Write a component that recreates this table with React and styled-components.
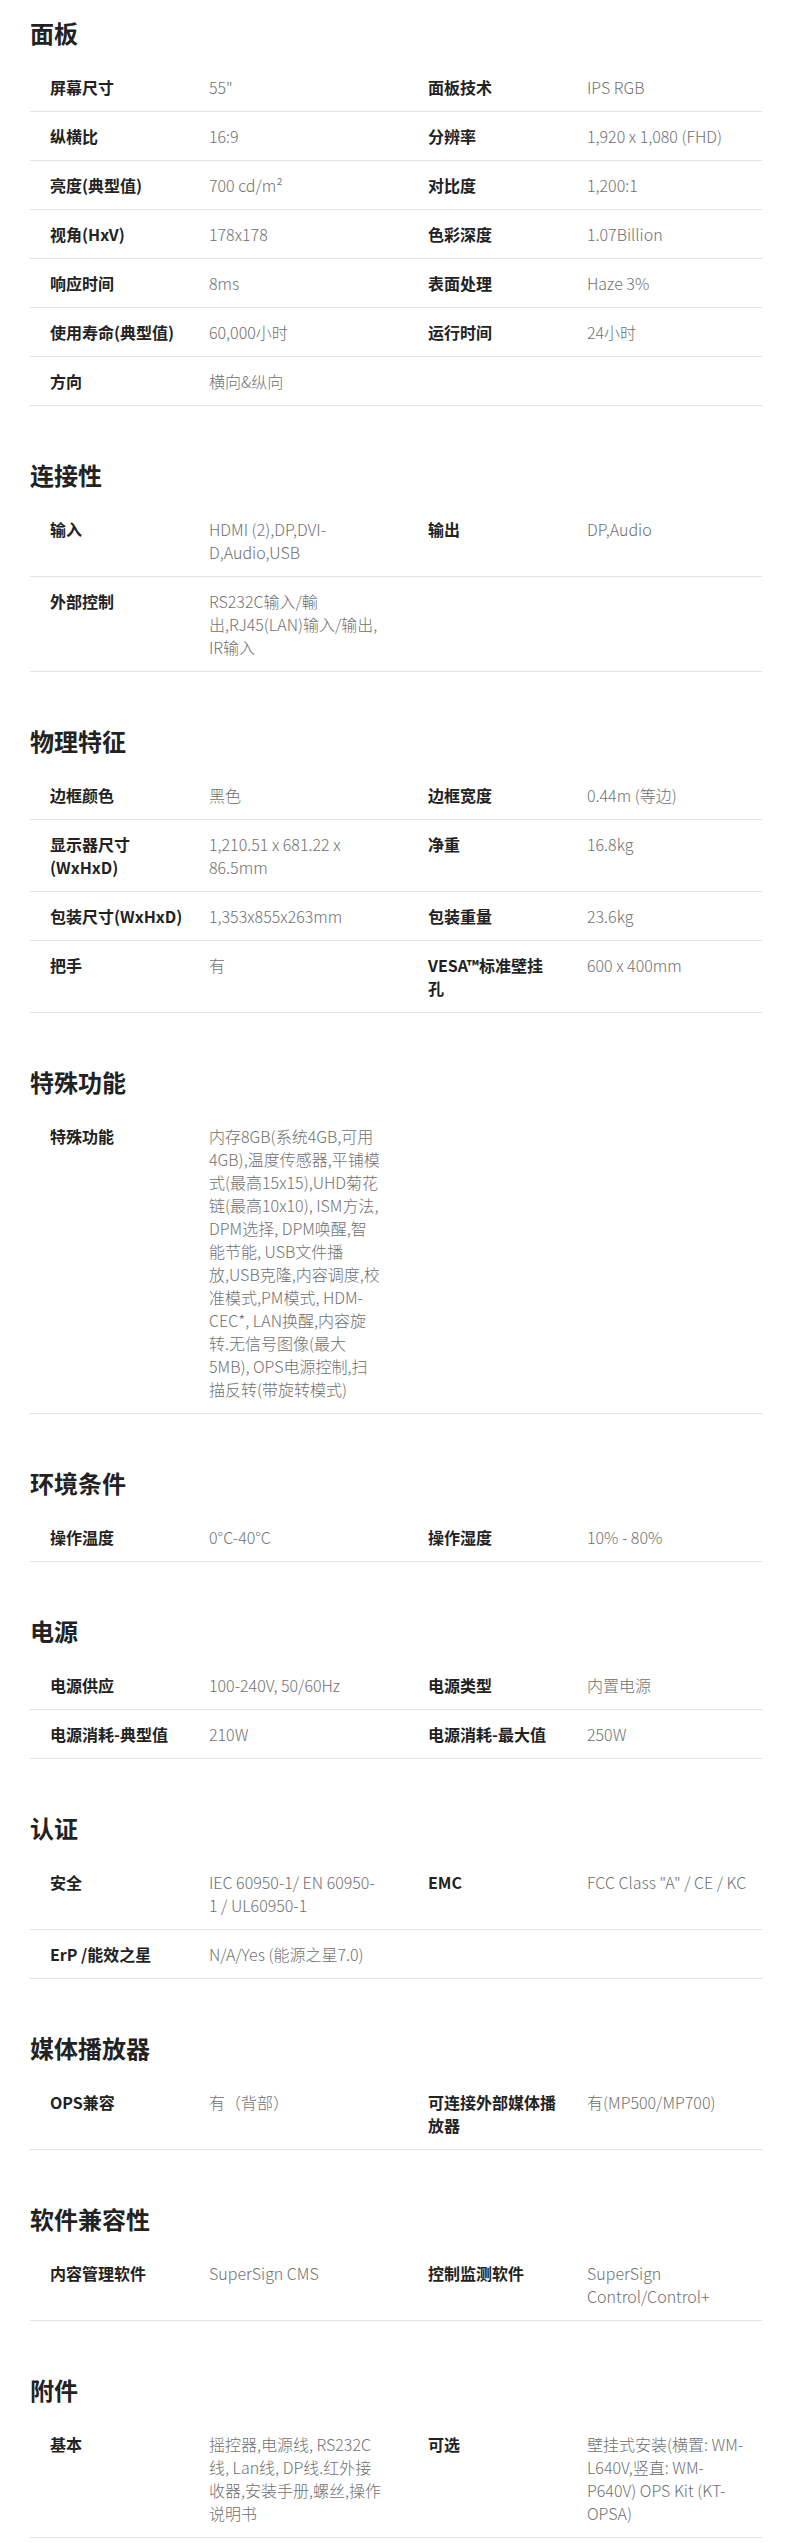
import React from "react";
import styled, { createGlobalStyle } from "styled-components";

const GlobalStyle = createGlobalStyle`
  body {
    margin: 0;
    background: #fff;
    font-family: "Noto Sans CJK SC", "Noto Sans", sans-serif;
  }
`;

const Page = styled.div`
  padding: 0 32px 14px 30px;
`;

const Section = styled.section`
  padding-top: 15px;

  & + & {
    margin-top: 36px;
  }
`;

const Title = styled.h2`
  margin: 0 0 12px;
  font-size: 24px;
  line-height: 36px;
  font-weight: 700;
  color: #222;
`;

const Row = styled.div`
  display: grid;
  grid-template-columns: 159px 219px 159px 1fr;
  padding: 13px 0 12px 20px;
  border-bottom: 1px solid #e4e4e4;
  line-height: 23px;
  font-size: 16px;
`;

const Label = styled.div`
  padding-right: 23px;
  font-weight: 700;
  color: #222;
  white-space: pre-line;
`;

const Value = styled.div`
  padding-right: ${(p) => (p.$last ? "0" : "38px")};
  font-weight: 300;
  color: #707070;
  white-space: pre-line;
`;

const specs = [
  {
    title: "面板",
    rows: [
      ["屏幕尺寸", '55"', "面板技术", "IPS RGB"],
      ["纵横比", "16:9", "分辨率", "1,920 x 1,080 (FHD)"],
      ["亮度(典型值)", "700 cd/m²", "对比度", "1,200:1"],
      ["视角(HxV)", "178x178", "色彩深度", "1.07Billion"],
      ["响应时间", "8ms", "表面处理", "Haze 3%"],
      ["使用寿命(典型值)", "60,000小时", "运行时间", "24小时"],
      ["方向", "横向&纵向"],
    ],
  },
  {
    title: "连接性",
    rows: [
      ["输入", "HDMI (2),DP,DVI-\nD,Audio,USB", "输出", "DP,Audio"],
      ["外部控制", "RS232C输入/輸\n出,RJ45(LAN)输入/输出,\nIR输入"],
    ],
  },
  {
    title: "物理特征",
    rows: [
      ["边框颜色", "黑色", "边框宽度", "0.44m (等边)"],
      ["显示器尺寸(WxHxD)", "1,210.51 x 681.22 x\n86.5mm", "净重", "16.8kg"],
      ["包装尺寸(WxHxD)", "1,353x855x263mm", "包装重量", "23.6kg"],
      ["把手", "有", "VESA™标准壁挂\n孔", "600 x 400mm"],
    ],
  },
  {
    title: "特殊功能",
    rows: [
      [
        "特殊功能",
        [
          "内存8GB(系统4GB,可用",
          "4GB),温度传感器,平铺模",
          "式(最高15x15),UHD菊花",
          "链(最高10x10), ISM方法,",
          "DPM选择, DPM唤醒,智",
          "能节能, USB文件播",
          "放,USB克隆,内容调度,校",
          "准模式,PM模式, HDM-",
          "CEC*, LAN换醒,内容旋",
          "转.无信号图像(最大",
          "5MB), OPS电源控制,扫",
          "描反转(带旋转模式)",
        ].join("\n"),
      ],
    ],
  },
  {
    title: "环境条件",
    rows: [["操作温度", "0°C-40°C", "操作湿度", "10% - 80%"]],
  },
  {
    title: "电源",
    rows: [
      ["电源供应", "100-240V, 50/60Hz", "电源类型", "内置电源"],
      ["电源消耗-典型值", "210W", "电源消耗-最大值", "250W"],
    ],
  },
  {
    title: "认证",
    rows: [
      ["安全", "IEC 60950-1/ EN 60950-\n1 / UL60950-1", "EMC", 'FCC Class "A" / CE / KC'],
      ["ErP /能效之星", "N/A/Yes (能源之星7.0)"],
    ],
  },
  {
    title: "媒体播放器",
    rows: [["OPS兼容", "有（背部）", "可连接外部媒体播\n放器", "有(MP500/MP700)"]],
  },
  {
    title: "软件兼容性",
    rows: [["内容管理软件", "SuperSign CMS", "控制监测软件", "SuperSign\nControl/Control+"]],
  },
  {
    title: "附件",
    rows: [
      [
        "基本",
        "摇控器,电源线, RS232C\n线, Lan线, DP线.红外接\n收器,安装手册,螺丝,操作\n说明书",
        "可选",
        "壁挂式安装(横置: WM-\nL640V,竖直: WM-\nP640V) OPS Kit (KT-\nOPSA)",
      ],
    ],
  },
];

export default function App() {
  return (
    <Page>
      <GlobalStyle />
      {specs.map((section) => (
        <Section key={section.title}>
          <Title>{section.title}</Title>
          {section.rows.map((row, i) => (
            <Row key={i}>
              <Label>{row[0]}</Label>
              <Value>{row[1]}</Value>
              {row[2] && <Label>{row[2]}</Label>}
              {row[3] && <Value $last>{row[3]}</Value>}
            </Row>
          ))}
        </Section>
      ))}
    </Page>
  );
}
